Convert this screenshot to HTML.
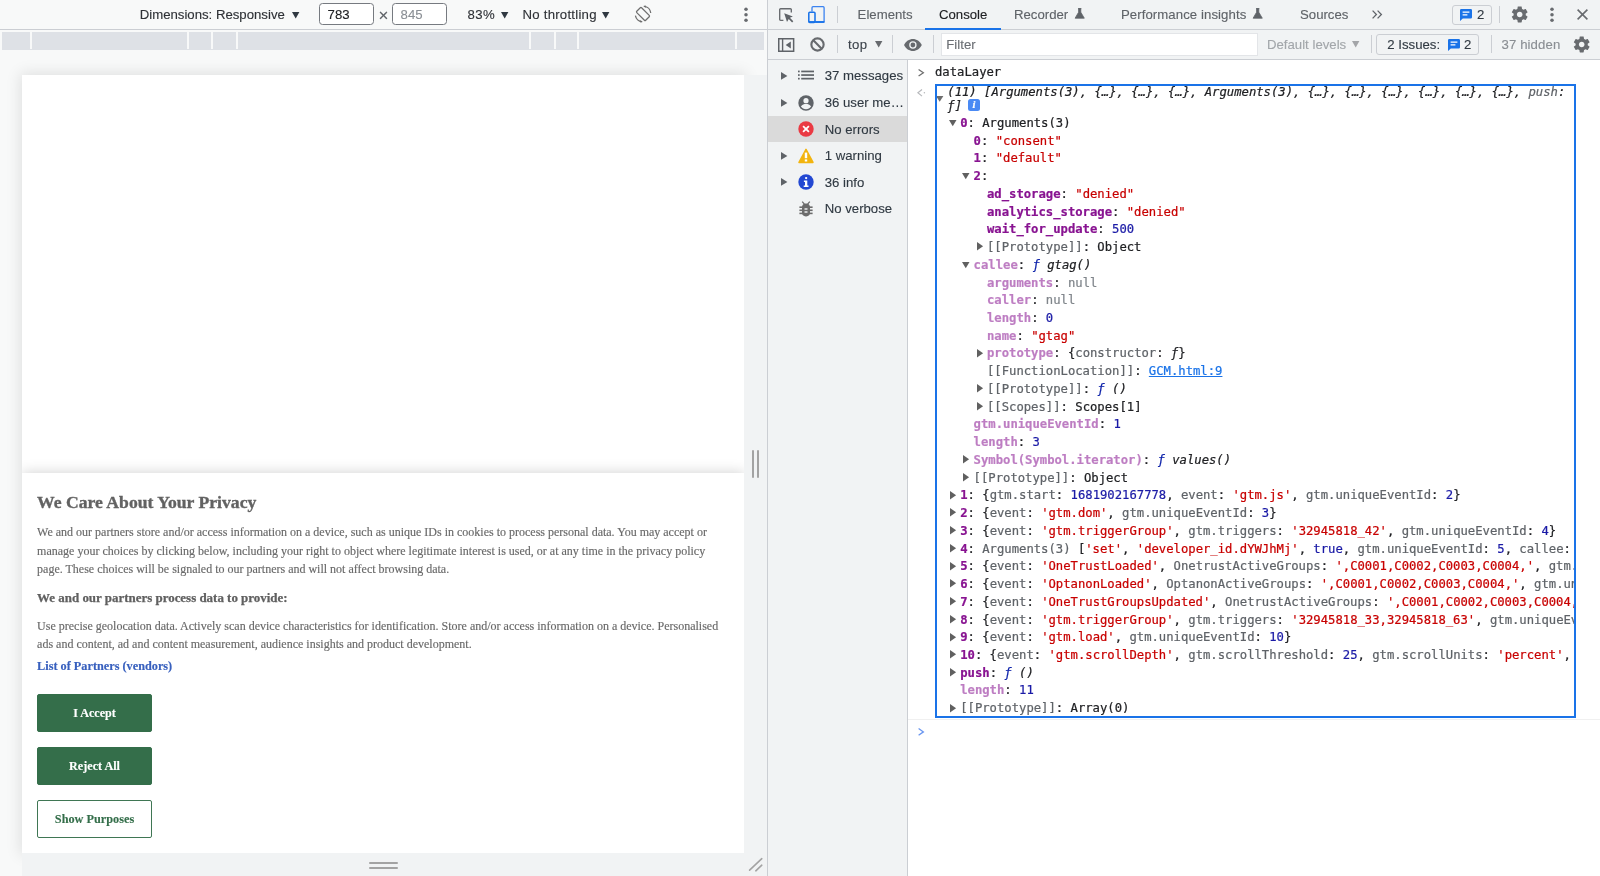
<!DOCTYPE html>
<html lang="en">
<head>
<meta charset="utf-8">
<title>DevTools - dataLayer</title>
<style>
*{box-sizing:border-box;margin:0;padding:0}
html,body{width:1600px;height:876px;overflow:hidden;background:#fff}
body{position:relative;font-family:"Liberation Sans",Arial,sans-serif;font-size:13.2px;color:#2e3136;-webkit-text-stroke:.12px}
.abs{position:absolute}
.t{position:absolute;white-space:pre;line-height:16px}
svg{position:absolute;overflow:visible}
/* ---------- left: device mode ---------- */
#left{will-change:transform;position:absolute;left:0;top:0;width:767px;height:876px;background:#f8f9f9;overflow:hidden}
#ltb{position:absolute;left:0;top:0;width:767px;height:30px;border-bottom:1px solid #cbced3}
.inp{position:absolute;top:3.1px;height:22.4px;width:55px;border:1px solid #767a80;border-radius:3.5px;background:#fff}
#mq{position:absolute;left:2px;top:32px;width:762px;height:18px;background:#dee1e6}
#mq i{position:absolute;top:0;width:2px;height:17px;background:#f8f9f9}
#page{position:absolute;left:22px;top:74.5px;width:722.3px;height:778.5px;background:#fff;box-shadow:0 0 14px 2px rgba(0,0,0,.10);overflow:hidden}
#rres{position:absolute;left:744.3px;top:74.5px;width:23px;height:802px;background:#f1f3f4}
#bres{position:absolute;left:22px;top:853px;width:745px;height:23px;background:#f1f3f4}
#banner{position:absolute;left:0;top:398.5px;width:723px;height:381px;background:#fff;box-shadow:0 0 13px rgba(0,0,0,.19);font-family:"Liberation Serif","Times New Roman",serif;color:#696969}
#banner .t{line-height:18px;-webkit-text-stroke:.15px}
.btn{position:absolute;left:15px;width:115px;height:38.4px;border-radius:2px;background:#346e4a;border:1px solid #346e4a;color:#fff;font-weight:bold;font-size:12.12px;text-align:center;line-height:36.5px;font-family:"Liberation Serif",serif}
/* ---------- right: devtools ---------- */
#vdiv{position:absolute;left:767px;top:0;width:1px;height:876px;background:#cbced3}
#right{will-change:transform;position:absolute;left:768px;top:0;width:832px;height:876px;background:#fff;overflow:hidden}
.tb{position:absolute;left:0;width:832px;height:30px;background:#f1f3f4;border-bottom:1px solid #cbced3}
.sep{position:absolute;width:1px;background:#cbced3}
#side{position:absolute;left:0;top:60px;width:140px;height:816px;background:#f1f3f4;border-right:1px solid #cbced3}
.mono{font-family:"DejaVu Sans Mono","Liberation Mono",monospace;font-size:12.22px;-webkit-text-stroke:.22px}
#con{position:absolute;left:0;top:0;width:832px;height:876px}
#con .r{position:absolute;white-space:pre;line-height:17.76px;height:17.76px}
#obox{position:absolute;left:166.6px;top:84.4px;width:641.6px;height:633.2px;border:2.2px solid #1a73e8;overflow:hidden}
#oin{position:absolute;left:-168.8px;top:-86.6px;width:832px;height:876px}
.n{color:#881391;font-weight:bold}
.d{color:#881391;font-weight:bold;opacity:.55}
.y{color:#5f6368}
.s{color:#c80000}
.u{color:#1a1aa6}
.nl{color:#80868b}
.k{color:#202124}
.f{color:#0d22aa;font-style:italic}
.fi{font-style:italic;color:#202124}
.ar{position:absolute}
</style>
</head>
<body>
<div id="left">
  <div id="ltb">
    <span class="t" style="left:139.7px;top:6.6px">Dimensions: Responsive</span>
    <svg style="left:291.5px;top:11.8px" width="7.4" height="6.6" viewBox="0 0 7.4 6.6"><path d="M0 0H7.4L3.7 6.6Z" fill="#303942"/></svg>
    <div class="inp" style="left:319px"></div>
    <span class="t" style="left:327.6px;top:6.6px;color:#202124">783</span>
    <span class="t" style="left:378.4px;top:7.6px;font-size:17px;color:#5f6368">×</span>
    <div class="inp" style="left:392.3px"></div>
    <span class="t" style="left:400.6px;top:6.6px;color:#8a8f95">845</span>
    <span class="t" style="left:467.5px;top:6.6px;letter-spacing:.4px">83%</span>
    <svg style="left:501.3px;top:11.8px" width="7.4" height="6.6" viewBox="0 0 7.4 6.6"><path d="M0 0H7.4L3.7 6.6Z" fill="#303942"/></svg>
    <span class="t" style="left:522.5px;top:6.6px;letter-spacing:.24px">No throttling</span>
    <svg style="left:602px;top:11.8px" width="7.4" height="6.6" viewBox="0 0 7.4 6.6"><path d="M0 0H7.4L3.7 6.6Z" fill="#303942"/></svg>
    <svg style="left:633.8px;top:5.2px" width="18" height="18" viewBox="-9 -9 18 18" fill="none" stroke="#6e6e6e" stroke-width="1.25">
      <rect x="-3.4" y="-6.3" width="6.8" height="12.6" rx="0.9" transform="rotate(-45)"/>
      <path d="M-7.6 1.6A7.8 7.8 0 0 0 -0.9 7.75M7.75 -1A7.8 7.8 0 0 0 0.9 -7.75"/>
      <path d="M-2.6 5.9L-0.3 7.9L-2.9 8.4ZM2.6 -5.9L0.3 -7.9L2.9 -8.4Z" fill="#6e6e6e" stroke="none"/>
    </svg>
    <svg style="left:744px;top:7.1px" width="4" height="15" viewBox="0 0 4 15"><circle cx="2" cy="2.2" r="1.75" fill="#686b6f"/><circle cx="2" cy="7.7" r="1.75" fill="#686b6f"/><circle cx="2" cy="13.2" r="1.75" fill="#686b6f"/></svg>
  </div>
  <div id="mq"><i style="left:27.5px"></i><i style="left:185px"></i><i style="left:208.6px"></i><i style="left:233.6px"></i><i style="left:527px"></i><i style="left:552px"></i><i style="left:575.1px"></i><i style="left:733px"></i></div>
  <div id="page"><div id="banner">
      <div class="t" style="left:15.1px;top:18.5px;font-size:17.65px;font-weight:bold;line-height:20px;color:#626262;-webkit-text-stroke:.35px">We Care About Your Privacy</div>
      <div class="t" style="left:15.1px;top:50.3px;font-size:12px;line-height:18.2px">We and our partners store and/or access information on a device, such as unique IDs in cookies to process personal data. You may accept or<br>manage your choices by clicking below, including your right to object where legitimate interest is used, or at any time in the privacy policy<br>page. These choices will be signaled to our partners and will not affect browsing data.</div>
      <div class="t" style="left:15.1px;top:116.1px;font-size:12.95px;font-weight:bold;color:#606060;-webkit-text-stroke:.25px">We and our partners process data to provide:</div>
      <div class="t" style="left:15.1px;top:143.7px;font-size:12px;line-height:18.3px">Use precise geolocation data. Actively scan device characteristics for identification. Store and/or access information on a device. Personalised<br>ads and content, ad and content measurement, audience insights and product development.</div>
      <div class="t" style="left:15.1px;top:183.9px;font-size:12.25px;font-weight:bold;color:#3860be">List of Partners (vendors)</div>
      <div class="btn" style="top:220.5px;line-height:37.6px">I Accept</div>
      <div class="btn" style="top:274px;height:38.1px">Reject All</div>
      <div class="btn" style="top:327.2px;height:37.9px;line-height:36.2px;font-size:12.25px;background:#fff;color:#346e4a;border-color:#3f7654">Show Purposes</div>
    </div></div>
  <div id="rres"><i class="abs" style="left:7.7px;top:375px;width:2.1px;height:28.6px;background:#a3a3a3;border-radius:1px"></i><i class="abs" style="left:12.5px;top:375px;width:2.1px;height:28.6px;background:#a3a3a3;border-radius:1px"></i></div>
  <div id="bres"><i class="abs" style="left:347.3px;top:9.2px;width:29px;height:2px;background:#a3a3a3;border-radius:1px"></i><i class="abs" style="left:347.3px;top:13.7px;width:29px;height:2px;background:#a3a3a3;border-radius:1px"></i>
    <svg style="left:725px;top:3px" width="18" height="18" viewBox="0 0 18 18" stroke="#a3a3a3" stroke-width="1.6" stroke-linecap="round"><path d="M2.6 14.2L14.8 2.7M8.8 14.8L14.8 9.2"/></svg>
  </div>
</div>
<div id="vdiv"></div>
<div id="right">
  <div class="tb" id="tb1" style="top:0">
    <svg style="left:11.1px;top:7.7px" width="15" height="15" viewBox="0 0 15 15"><path d="M12.3 4.6V1.6A0.9 0.9 0 0 0 11.4 0.7H1.6A0.9 0.9 0 0 0 0.7 1.6V11.4A0.9 0.9 0 0 0 1.6 12.3H4.4" fill="none" stroke="#676a6e" stroke-width="1.35"/><path d="M5.2 5.2L13.9 8.4L10.9 9.8L14.3 13.2L13.1 14.4L9.7 11L8 13.9Z" fill="#5f6368"/></svg>
    <svg style="left:40px;top:5.6px" width="17" height="17.5" viewBox="0 0 17 17.5" fill="none"><path d="M4 5.4V1.7A1 1 0 0 1 5 0.7H15.1A1 1 0 0 1 16.1 1.7V15.4A1 1 0 0 1 15.1 16.4H7.4" stroke="#3b82f0" stroke-width="1.3"/><rect x="0.8" y="6.2" width="6.2" height="10.4" rx="1" stroke="#1a73e8" stroke-width="1.55"/><path d="M0.8 15.9H16.4" stroke="#1a73e8" stroke-width="1.7"/></svg>
    <i class="sep" style="left:69px;top:6px;height:17px"></i>
    <span class="t" style="left:89.6px;top:6.6px;color:#5f6368">Elements</span>
    <span class="t" style="left:171px;top:6.6px;color:#202124">Console</span>
    <i class="abs" style="left:157px;top:27.6px;width:76px;height:2.2px;background:#1a73e8"></i>
    <span class="t" style="left:246px;top:6.6px;color:#5f6368">Recorder</span>
    <svg style="left:306.2px;top:8px" width="11.4" height="11" viewBox="0 0 11.4 11"><path d="M4 0.6H7.4M4.6 0.6V4.2L1.1 10.2H10.3L6.8 4.2V0.6Z" fill="#5f6368" stroke="#5f6368" stroke-width="0.8" stroke-linejoin="round"/></svg>
    <span class="t" style="left:352.9px;top:6.6px;color:#5f6368;letter-spacing:.08px">Performance insights</span>
    <svg style="left:484.4px;top:8px" width="11.4" height="11" viewBox="0 0 11.4 11"><path d="M4 0.6H7.4M4.6 0.6V4.2L1.1 10.2H10.3L6.8 4.2V0.6Z" fill="#5f6368" stroke="#5f6368" stroke-width="0.8" stroke-linejoin="round"/></svg>
    <span class="t" style="left:532px;top:6.6px;color:#5f6368">Sources</span>
    <svg style="left:603.8px;top:10px" width="11" height="9" viewBox="0 0 11 9" fill="none" stroke="#5f6368" stroke-width="1.3"><path d="M0.6 0.6L4.4 4.5L0.6 8.4M5.6 0.6L9.4 4.5L5.6 8.4"/></svg>
    <div class="abs" style="left:684.4px;top:4.5px;width:39.5px;height:20.3px;border:1px solid #cbced3;border-radius:3px"></div>
    <svg style="left:692px;top:8.8px" width="12" height="12" viewBox="0 0 12 12"><path d="M1.2 0H10.8A1.2 1.2 0 0 1 12 1.2V8.3A1.2 1.2 0 0 1 10.8 9.5H2.8L0 12V1.2A1.2 1.2 0 0 1 1.2 0Z" fill="#1a73e8"/><path d="M2.6 3.1H9.4M2.6 5.9H7.4" stroke="#fff" stroke-width="1.3"/></svg>
    <span class="t" style="left:709px;top:6.6px;color:#303942">2</span>
    <i class="sep" style="left:731.4px;top:6px;height:17px"></i>
    <svg style="left:742.2px;top:4.800000000000001px" width="19.4" height="19" viewBox="0 0 24 24" preserveAspectRatio="none"><path d="M19.43 12.98c.04-.32.07-.64.07-.98s-.03-.66-.07-.98l2.11-1.65c.19-.15.24-.42.12-.64l-2-3.46c-.12-.22-.39-.3-.61-.22l-2.49 1c-.52-.4-1.08-.73-1.69-.98l-.38-2.65C14.46 2.18 14.25 2 14 2h-4c-.25 0-.46.18-.49.42l-.38 2.65c-.61.25-1.17.59-1.69.98l-2.49-1c-.23-.09-.49 0-.61.22l-2 3.46c-.13.22-.07.49.12.64l2.11 1.65c-.04.32-.07.65-.07.98s.03.66.07.98l-2.11 1.65c-.19.15-.24.42-.12.64l2 3.46c.12.22.39.3.61.22l2.49-1c.52.4 1.08.73 1.69.98l.38 2.65c.03.24.24.42.49.42h4c.25 0 .46-.18.49-.42l.38-2.65c.61-.25 1.17-.59 1.69-.98l2.49 1c.23.09.49 0 .61-.22l2-3.46c.12-.22.07-.49-.12-.64l-2.11-1.65zM12 15.5c-1.93 0-3.5-1.57-3.5-3.5s1.57-3.5 3.5-3.5 3.5 1.57 3.5 3.5-1.57 3.5-3.5 3.5z" fill="#686b6f"/></svg>
    <svg style="left:781.8px;top:7.1px" width="4" height="15" viewBox="0 0 4 15"><circle cx="2" cy="2.2" r="1.75" fill="#686b6f"/><circle cx="2" cy="7.7" r="1.75" fill="#686b6f"/><circle cx="2" cy="13.2" r="1.75" fill="#686b6f"/></svg>
    <svg style="left:808.9px;top:9.1px" width="11" height="11" viewBox="0 0 11 11" stroke="#686b6f" stroke-width="1.6"><path d="M0.6 0.6L10.4 10.4M10.4 0.6L0.6 10.4"/></svg>
  </div>
  <div class="tb" id="tb2" style="top:30px">
    <svg style="left:10px;top:7.8px" width="16.4" height="14" viewBox="0 0 16.4 14"><rect x="0.75" y="0.75" width="14.9" height="12.5" fill="none" stroke="#5f6368" stroke-width="1.5"/><path d="M4.6 0.7V13.3" stroke="#5f6368" stroke-width="1.4"/><path d="M12.8 3.5V10.5L7.7 7Z" fill="#5f6368"/></svg>
    <svg style="left:41.8px;top:7.4px" width="15" height="15" viewBox="-7.5 -7.5 15 15" fill="none" stroke="#676a6e" stroke-width="2.1"><circle r="6.15"/><path d="M-4.4 -4.4L4.4 4.4"/></svg>
    <i class="sep" style="left:69px;top:5.2px;height:17.8px"></i>
    <span class="t" style="left:80px;top:6.8px;color:#3c434b;letter-spacing:.4px">top</span>
    <svg style="left:106.5px;top:11px" width="7.4" height="6.6" viewBox="0 0 7.4 6.6"><path d="M0 0H7.4L3.7 6.6Z" fill="#676a6e"/></svg>
    <i class="sep" style="left:124px;top:5.2px;height:17.8px"></i>
    <svg style="left:136.4px;top:8.5px" width="17.8" height="12" viewBox="-8.9 -6 17.8 12"><path d="M-8.9 0C-7.1 -3.8 -3.6 -6 0 -6S7.1 -3.8 8.9 0C7.1 3.8 3.6 6 0 6S-7.1 3.8 -8.9 0Z" fill="#676a6e"/><circle r="3.7" fill="#f1f3f4"/><circle r="2.4" fill="#676a6e"/></svg>
    <i class="sep" style="left:165px;top:5.2px;height:17.8px"></i>
    <div class="abs" style="left:173px;top:3.4px;width:316.5px;height:22.2px;background:#fff;border:1px solid #e3e5e8"></div>
    <span class="t" style="left:178.3px;top:7.4px;color:#6b6f74">Filter</span>
    <span class="t" style="left:499px;top:6.8px;color:#a2a6aa">Default levels</span>
    <svg style="left:584.3px;top:11.1px" width="7.4" height="6.6" viewBox="0 0 7.4 6.6"><path d="M0 0H7.4L3.7 6.6Z" fill="#a3a5a8"/></svg>
    <i class="sep" style="left:602.6px;top:5.2px;height:17.8px"></i>
    <div class="abs" style="left:608.3px;top:4px;width:103px;height:20.8px;border:1px solid #cbced3;border-radius:3px"></div>
    <span class="t" style="left:619.3px;top:6.8px;color:#303942">2 Issues:</span>
    <svg style="left:679.6px;top:8.8px" width="12" height="12" viewBox="0 0 12 12"><path d="M1.2 0H10.8A1.2 1.2 0 0 1 12 1.2V8.3A1.2 1.2 0 0 1 10.8 9.5H2.8L0 12V1.2A1.2 1.2 0 0 1 1.2 0Z" fill="#1a73e8"/><path d="M2.6 3.1H9.4M2.6 5.9H7.4" stroke="#fff" stroke-width="1.3"/></svg>
    <span class="t" style="left:696px;top:6.8px;color:#303942">2</span>
    <i class="sep" style="left:723px;top:5.2px;height:17.8px"></i>
    <span class="t" style="left:733.5px;top:6.8px;color:#8a8e93;letter-spacing:.1px">37 hidden</span>
    <svg style="left:804.1px;top:4.800000000000001px" width="19.4" height="19" viewBox="0 0 24 24" preserveAspectRatio="none"><path d="M19.43 12.98c.04-.32.07-.64.07-.98s-.03-.66-.07-.98l2.11-1.65c.19-.15.24-.42.12-.64l-2-3.46c-.12-.22-.39-.3-.61-.22l-2.49 1c-.52-.4-1.08-.73-1.69-.98l-.38-2.65C14.46 2.18 14.25 2 14 2h-4c-.25 0-.46.18-.49.42l-.38 2.65c-.61.25-1.17.59-1.69.98l-2.49-1c-.23-.09-.49 0-.61.22l-2 3.46c-.13.22-.07.49.12.64l2.11 1.65c-.04.32-.07.65-.07.98s.03.66.07.98l-2.11 1.65c-.19.15-.24.42-.12.64l2 3.46c.12.22.39.3.61.22l2.49-1c.52.4 1.08.73 1.69.98l.38 2.65c.03.24.24.42.49.42h4c.25 0 .46-.18.49-.42l.38-2.65c.61-.25 1.17-.59 1.69-.98l2.49 1c.23.09.49 0 .61-.22l2-3.46c.12-.22.07-.49-.12-.64l-2.11-1.65zM12 15.5c-1.93 0-3.5-1.57-3.5-3.5s1.57-3.5 3.5-3.5 3.5 1.57 3.5 3.5-1.57 3.5-3.5 3.5z" fill="#686b6f"/></svg>
  </div>
  <div id="side">
    <i class="abs" style="left:0;top:55.8px;width:139px;height:26.2px;background:#dadada"></i>
    <svg style="left:13.2px;top:11.90px" width="6.4" height="7.8" viewBox="0 0 6.4 7.8"><path d="M0 0V7.8L6.4 3.9Z" fill="#5f6368"/></svg>
    <svg style="left:29.7px;top:7.90px" width="16" height="16" viewBox="0 0 16 16"><g fill="#5f6368"><rect x="0" y="2.6" width="1.7" height="1.7"/><rect x="0" y="6.2" width="1.7" height="1.7"/><rect x="0" y="9.8" width="1.7" height="1.7"/><rect x="3.2" y="2.6" width="12.8" height="1.7"/><rect x="3.2" y="6.2" width="12.8" height="1.7"/><rect x="3.2" y="9.8" width="12.8" height="1.7"/></g></svg>
    <span class="t" style="left:56.7px;top:8.30px;color:#303942">37 messages</span>
    <svg style="left:13.2px;top:38.52px" width="6.4" height="7.8" viewBox="0 0 6.4 7.8"><path d="M0 0V7.8L6.4 3.9Z" fill="#5f6368"/></svg>
    <svg style="left:29.7px;top:34.52px" width="16" height="16" viewBox="0 0 16 16"><circle cx="8" cy="8" r="7.7" fill="#5f6368"/><circle cx="8" cy="5.7" r="2.6" fill="#f1f3f4"/><path d="M2.9 11.6C4.3 9.6 6 9.1 8 9.1S11.7 9.6 13.1 11.6A6.2 6.2 0 0 1 2.9 11.6Z" fill="#f1f3f4"/></svg>
    <span class="t" style="left:56.7px;top:34.92px;color:#303942">36 user me…</span>
    <svg style="left:29.7px;top:61.14px" width="16" height="16" viewBox="0 0 16 16"><circle cx="8" cy="8" r="7.7" fill="#ea3a43"/><path d="M5.1 5.1L10.9 10.9M10.9 5.1L5.1 10.9" stroke="#fff" stroke-width="1.8"/></svg>
    <span class="t" style="left:56.7px;top:61.54px;color:#303942">No errors</span>
    <svg style="left:13.2px;top:91.76px" width="6.4" height="7.8" viewBox="0 0 6.4 7.8"><path d="M0 0V7.8L6.4 3.9Z" fill="#5f6368"/></svg>
    <svg style="left:29.7px;top:87.76px" width="16" height="16" viewBox="0 0 16 16"><path d="M8 1.3L15 14.4H1Z" fill="#f2b40f" stroke="#f2b40f" stroke-width="1.5" stroke-linejoin="round"/><rect x="6.8" y="4.6" width="2.4" height="5.6" fill="#fff"/><rect x="6.8" y="11.4" width="2.4" height="2.1" fill="#fff"/></svg>
    <span class="t" style="left:56.7px;top:88.16px;color:#303942">1 warning</span>
    <svg style="left:13.2px;top:118.38px" width="6.4" height="7.8" viewBox="0 0 6.4 7.8"><path d="M0 0V7.8L6.4 3.9Z" fill="#5f6368"/></svg>
    <svg style="left:29.7px;top:114.38px" width="16" height="16" viewBox="0 0 16 16"><circle cx="8" cy="8" r="7.7" fill="#2348d2"/><rect x="7" y="3" width="2.3" height="2.2" rx="1.1" fill="#fff"/><path d="M5.9 6.6H9.3V11.6H10.5V12.9H5.7V11.6H7V7.9H5.9Z" fill="#fff"/></svg>
    <span class="t" style="left:56.7px;top:114.78px;color:#303942">36 info</span>
    <svg style="left:29.7px;top:141.00px" width="16" height="16" viewBox="0 0 16 16"><g fill="#6b6b6b"><rect x="4" y="2.4" width="8" height="13" rx="3.8"/><rect x="1.4" y="5.4" width="13.2" height="1.6"/><rect x="1.4" y="8.5" width="13.2" height="1.6"/><rect x="1.4" y="11.6" width="13.2" height="1.6"/><path d="M4.2 0.6L6.4 3.2M11.8 0.6L9.6 3.2" stroke="#6b6b6b" stroke-width="1.3"/></g><rect x="6.5" y="7.3" width="3" height="1.4" fill="#f1f3f4"/><rect x="6.5" y="10.3" width="3" height="1.4" fill="#f1f3f4"/></svg>
    <span class="t" style="left:56.7px;top:141.40px;color:#303942">No verbose</span>
  </div>
  <div id="con">
    <svg style="left:150px;top:68.6px" width="6.4" height="7.6" viewBox="0 0 6.4 7.6" fill="none" stroke="#6e6e6e" stroke-width="1.25"><path d="M0.6 0.5L5.4 3.8L0.6 7.1"/></svg>
    <div class="r mono k" style="left:167px;top:63.75px">dataLayer</div>
    <svg style="left:149px;top:89px" width="9" height="7.6" viewBox="0 0 9 7.6" fill="none" stroke="#b6b8bb" stroke-width="1.15"><path d="M5 0.5L0.9 3.8L5 7.1"/><circle cx="7.4" cy="3.8" r="0.75" fill="#b6b8bb" stroke="none"/></svg>
    <div id="obox"><div id="oin" class="mono">
      <div class="r fi" style="left:179.5px;top:85.3px;line-height:14.05px;height:auto">(11) [Arguments(3), {…}, {…}, {…}, Arguments(3), {…}, {…}, {…}, {…}, {…}, {…}, <span class="y">push</span>:<br>ƒ]</div>
      <svg style="left:168px;top:96.5px" width="7.4" height="5.8" viewBox="0 0 7.4 5.8"><path d="M0 0H7.4L3.7 5.8Z" fill="#6e6e6e"/></svg>
      <div class="abs" style="left:200px;top:99.4px;width:12.4px;height:11.9px;border-radius:2.5px;background:#4a8af4;color:#fff;font:italic bold 10.5px/12px 'Liberation Serif',serif;text-align:center">i</div>
      <div class="r" style="left:192.4px;top:115.10px"><svg class="ar" style="left:-11.7px;top:4.9px" width="7.5" height="6.3" viewBox="0 0 7.5 6.3"><path d="M0 0H7.5L3.75 6.3Z" fill="#606060"/></svg><span class="n">0</span><span class="k">: Arguments(3)</span></div>
      <div class="r" style="left:205.8px;top:132.84px"><span class="n">0</span><span class="k">: </span><span class="s">"consent"</span></div>
      <div class="r" style="left:205.8px;top:150.57px"><span class="n">1</span><span class="k">: </span><span class="s">"default"</span></div>
      <div class="r" style="left:205.8px;top:168.31px"><svg class="ar" style="left:-11.7px;top:4.9px" width="7.5" height="6.3" viewBox="0 0 7.5 6.3"><path d="M0 0H7.5L3.75 6.3Z" fill="#606060"/></svg><span class="n">2</span><span class="k">:</span></div>
      <div class="r" style="left:219.2px;top:186.04px"><span class="n">ad_storage</span><span class="k">: </span><span class="s">"denied"</span></div>
      <div class="r" style="left:219.2px;top:203.78px"><span class="n">analytics_storage</span><span class="k">: </span><span class="s">"denied"</span></div>
      <div class="r" style="left:219.2px;top:221.52px"><span class="n">wait_for_update</span><span class="k">: </span><span class="u">500</span></div>
      <div class="r" style="left:219.2px;top:239.25px"><svg class="ar" style="left:-10.4px;top:3.35px" width="6.1" height="8.5" viewBox="0 0 6.1 8.5"><path d="M0 0V8.5L6.1 4.25Z" fill="#606060"/></svg><span class="y">[[Prototype]]</span><span class="k">: Object</span></div>
      <div class="r" style="left:205.8px;top:256.99px"><svg class="ar" style="left:-11.7px;top:4.9px" width="7.5" height="6.3" viewBox="0 0 7.5 6.3"><path d="M0 0H7.5L3.75 6.3Z" fill="#606060"/></svg><span class="d">callee</span><span class="k">: </span><span class="f">ƒ</span><span class="fi"> gtag()</span></div>
      <div class="r" style="left:219.2px;top:274.72px"><span class="d">arguments</span><span class="k">: </span><span class="nl">null</span></div>
      <div class="r" style="left:219.2px;top:292.46px"><span class="d">caller</span><span class="k">: </span><span class="nl">null</span></div>
      <div class="r" style="left:219.2px;top:310.20px"><span class="d">length</span><span class="k">: </span><span class="u">0</span></div>
      <div class="r" style="left:219.2px;top:327.93px"><span class="d">name</span><span class="k">: </span><span class="s">"gtag"</span></div>
      <div class="r" style="left:219.2px;top:345.67px"><svg class="ar" style="left:-10.4px;top:3.35px" width="6.1" height="8.5" viewBox="0 0 6.1 8.5"><path d="M0 0V8.5L6.1 4.25Z" fill="#606060"/></svg><span class="d">prototype</span><span class="k">: {</span><span class="y">constructor</span><span class="k">: </span><span class="fi">ƒ</span><span class="k">}</span></div>
      <div class="r" style="left:219.2px;top:363.40px"><span class="y">[[FunctionLocation]]</span><span class="k">: </span><span style="color:#1a73e8;text-decoration:underline">GCM.html:9</span></div>
      <div class="r" style="left:219.2px;top:381.14px"><svg class="ar" style="left:-10.4px;top:3.35px" width="6.1" height="8.5" viewBox="0 0 6.1 8.5"><path d="M0 0V8.5L6.1 4.25Z" fill="#606060"/></svg><span class="y">[[Prototype]]</span><span class="k">: </span><span class="f">ƒ</span><span class="fi"> ()</span></div>
      <div class="r" style="left:219.2px;top:398.88px"><svg class="ar" style="left:-10.4px;top:3.35px" width="6.1" height="8.5" viewBox="0 0 6.1 8.5"><path d="M0 0V8.5L6.1 4.25Z" fill="#606060"/></svg><span class="y">[[Scopes]]</span><span class="k">: Scopes[1]</span></div>
      <div class="r" style="left:205.8px;top:416.61px"><span class="d">gtm.uniqueEventId</span><span class="k">: </span><span class="u">1</span></div>
      <div class="r" style="left:205.8px;top:434.35px"><span class="d">length</span><span class="k">: </span><span class="u">3</span></div>
      <div class="r" style="left:205.8px;top:452.08px"><svg class="ar" style="left:-10.4px;top:3.35px" width="6.1" height="8.5" viewBox="0 0 6.1 8.5"><path d="M0 0V8.5L6.1 4.25Z" fill="#606060"/></svg><span class="d">Symbol(Symbol.iterator)</span><span class="k">: </span><span class="f">ƒ</span><span class="fi"> values()</span></div>
      <div class="r" style="left:205.8px;top:469.82px"><svg class="ar" style="left:-10.4px;top:3.35px" width="6.1" height="8.5" viewBox="0 0 6.1 8.5"><path d="M0 0V8.5L6.1 4.25Z" fill="#606060"/></svg><span class="y">[[Prototype]]</span><span class="k">: Object</span></div>
      <div class="r" style="left:192.4px;top:487.56px"><svg class="ar" style="left:-10.4px;top:3.35px" width="6.1" height="8.5" viewBox="0 0 6.1 8.5"><path d="M0 0V8.5L6.1 4.25Z" fill="#606060"/></svg><span class="n">1</span><span class="k">: {</span><span class="y">gtm.start</span><span class="k">: </span><span class="u">1681902167778</span><span class="k">, </span><span class="y">event</span><span class="k">: </span><span class="s">'gtm.js'</span><span class="k">, </span><span class="y">gtm.uniqueEventId</span><span class="k">: </span><span class="u">2</span><span class="k">}</span></div>
      <div class="r" style="left:192.4px;top:505.29px"><svg class="ar" style="left:-10.4px;top:3.35px" width="6.1" height="8.5" viewBox="0 0 6.1 8.5"><path d="M0 0V8.5L6.1 4.25Z" fill="#606060"/></svg><span class="n">2</span><span class="k">: {</span><span class="y">event</span><span class="k">: </span><span class="s">'gtm.dom'</span><span class="k">, </span><span class="y">gtm.uniqueEventId</span><span class="k">: </span><span class="u">3</span><span class="k">}</span></div>
      <div class="r" style="left:192.4px;top:523.03px"><svg class="ar" style="left:-10.4px;top:3.35px" width="6.1" height="8.5" viewBox="0 0 6.1 8.5"><path d="M0 0V8.5L6.1 4.25Z" fill="#606060"/></svg><span class="n">3</span><span class="k">: {</span><span class="y">event</span><span class="k">: </span><span class="s">'gtm.triggerGroup'</span><span class="k">, </span><span class="y">gtm.triggers</span><span class="k">: </span><span class="s">'32945818_42'</span><span class="k">, </span><span class="y">gtm.uniqueEventId</span><span class="k">: </span><span class="u">4</span><span class="k">}</span></div>
      <div class="r" style="left:192.4px;top:540.76px"><svg class="ar" style="left:-10.4px;top:3.35px" width="6.1" height="8.5" viewBox="0 0 6.1 8.5"><path d="M0 0V8.5L6.1 4.25Z" fill="#606060"/></svg><span class="n">4</span><span class="k">: </span><span class="y">Arguments(3) </span><span class="k">[</span><span class="s">'set'</span><span class="k">, </span><span class="s">'developer_id.dYWJhMj'</span><span class="k">, </span><span class="u">true</span><span class="k">, </span><span class="y">gtm.uniqueEventId</span><span class="k">: </span><span class="u">5</span><span class="k">, </span><span class="y">callee</span><span class="k">: </span><span class="fi">ƒ</span><span class="k">, </span><span class="y">Symbol(Symbol.iterator)</span><span class="k">: </span><span class="fi">ƒ</span><span class="k">]</span></div>
      <div class="r" style="left:192.4px;top:558.50px"><svg class="ar" style="left:-10.4px;top:3.35px" width="6.1" height="8.5" viewBox="0 0 6.1 8.5"><path d="M0 0V8.5L6.1 4.25Z" fill="#606060"/></svg><span class="n">5</span><span class="k">: {</span><span class="y">event</span><span class="k">: </span><span class="s">'OneTrustLoaded'</span><span class="k">, </span><span class="y">OnetrustActiveGroups</span><span class="k">: </span><span class="s">',C0001,C0002,C0003,C0004,'</span><span class="k">, </span><span class="y">gtm.uniqueEventId</span><span class="k">: </span><span class="u">6</span><span class="k">}</span></div>
      <div class="r" style="left:192.4px;top:576.24px"><svg class="ar" style="left:-10.4px;top:3.35px" width="6.1" height="8.5" viewBox="0 0 6.1 8.5"><path d="M0 0V8.5L6.1 4.25Z" fill="#606060"/></svg><span class="n">6</span><span class="k">: {</span><span class="y">event</span><span class="k">: </span><span class="s">'OptanonLoaded'</span><span class="k">, </span><span class="y">OptanonActiveGroups</span><span class="k">: </span><span class="s">',C0001,C0002,C0003,C0004,'</span><span class="k">, </span><span class="y">gtm.uniqueEventId</span><span class="k">: </span><span class="u">7</span><span class="k">}</span></div>
      <div class="r" style="left:192.4px;top:593.97px"><svg class="ar" style="left:-10.4px;top:3.35px" width="6.1" height="8.5" viewBox="0 0 6.1 8.5"><path d="M0 0V8.5L6.1 4.25Z" fill="#606060"/></svg><span class="n">7</span><span class="k">: {</span><span class="y">event</span><span class="k">: </span><span class="s">'OneTrustGroupsUpdated'</span><span class="k">, </span><span class="y">OnetrustActiveGroups</span><span class="k">: </span><span class="s">',C0001,C0002,C0003,C0004,'</span><span class="k">, </span><span class="y">gtm.uniqueEventId</span><span class="k">: </span><span class="u">8</span><span class="k">}</span></div>
      <div class="r" style="left:192.4px;top:611.71px"><svg class="ar" style="left:-10.4px;top:3.35px" width="6.1" height="8.5" viewBox="0 0 6.1 8.5"><path d="M0 0V8.5L6.1 4.25Z" fill="#606060"/></svg><span class="n">8</span><span class="k">: {</span><span class="y">event</span><span class="k">: </span><span class="s">'gtm.triggerGroup'</span><span class="k">, </span><span class="y">gtm.triggers</span><span class="k">: </span><span class="s">'32945818_33,32945818_63'</span><span class="k">, </span><span class="y">gtm.uniqueEventId</span><span class="k">: </span><span class="u">9</span><span class="k">}</span></div>
      <div class="r" style="left:192.4px;top:629.44px"><svg class="ar" style="left:-10.4px;top:3.35px" width="6.1" height="8.5" viewBox="0 0 6.1 8.5"><path d="M0 0V8.5L6.1 4.25Z" fill="#606060"/></svg><span class="n">9</span><span class="k">: {</span><span class="y">event</span><span class="k">: </span><span class="s">'gtm.load'</span><span class="k">, </span><span class="y">gtm.uniqueEventId</span><span class="k">: </span><span class="u">10</span><span class="k">}</span></div>
      <div class="r" style="left:192.4px;top:647.18px"><svg class="ar" style="left:-10.4px;top:3.35px" width="6.1" height="8.5" viewBox="0 0 6.1 8.5"><path d="M0 0V8.5L6.1 4.25Z" fill="#606060"/></svg><span class="n">10</span><span class="k">: {</span><span class="y">event</span><span class="k">: </span><span class="s">'gtm.scrollDepth'</span><span class="k">, </span><span class="y">gtm.scrollThreshold</span><span class="k">: </span><span class="u">25</span><span class="k">, </span><span class="y">gtm.scrollUnits</span><span class="k">: </span><span class="s">'percent'</span><span class="k">, </span><span class="y">gtm.uniqueEventId</span><span class="k">: </span><span class="u">11</span><span class="k">}</span></div>
      <div class="r" style="left:192.4px;top:664.92px"><svg class="ar" style="left:-10.4px;top:3.35px" width="6.1" height="8.5" viewBox="0 0 6.1 8.5"><path d="M0 0V8.5L6.1 4.25Z" fill="#606060"/></svg><span class="n">push</span><span class="k">: </span><span class="f">ƒ</span><span class="fi"> ()</span></div>
      <div class="r" style="left:192.4px;top:682.65px"><span class="d">length</span><span class="k">: </span><span class="u">11</span></div>
      <div class="r" style="left:192.4px;top:700.39px"><svg class="ar" style="left:-10.4px;top:3.35px" width="6.1" height="8.5" viewBox="0 0 6.1 8.5"><path d="M0 0V8.5L6.1 4.25Z" fill="#606060"/></svg><span class="y">[[Prototype]]</span><span class="k">: Array(0)</span></div>
    </div></div>
    <i class="abs" style="left:140px;top:719px;width:692px;height:1px;background:#f0f0f0"></i>
    <svg style="left:150px;top:727.6px" width="6.4" height="7.8" viewBox="0 0 6.4 7.8" fill="none" stroke="#6a96f0" stroke-width="1.3"><path d="M0.6 0.5L5.4 3.9L0.6 7.3"/></svg>
  </div>
</div>
</body>
</html>
